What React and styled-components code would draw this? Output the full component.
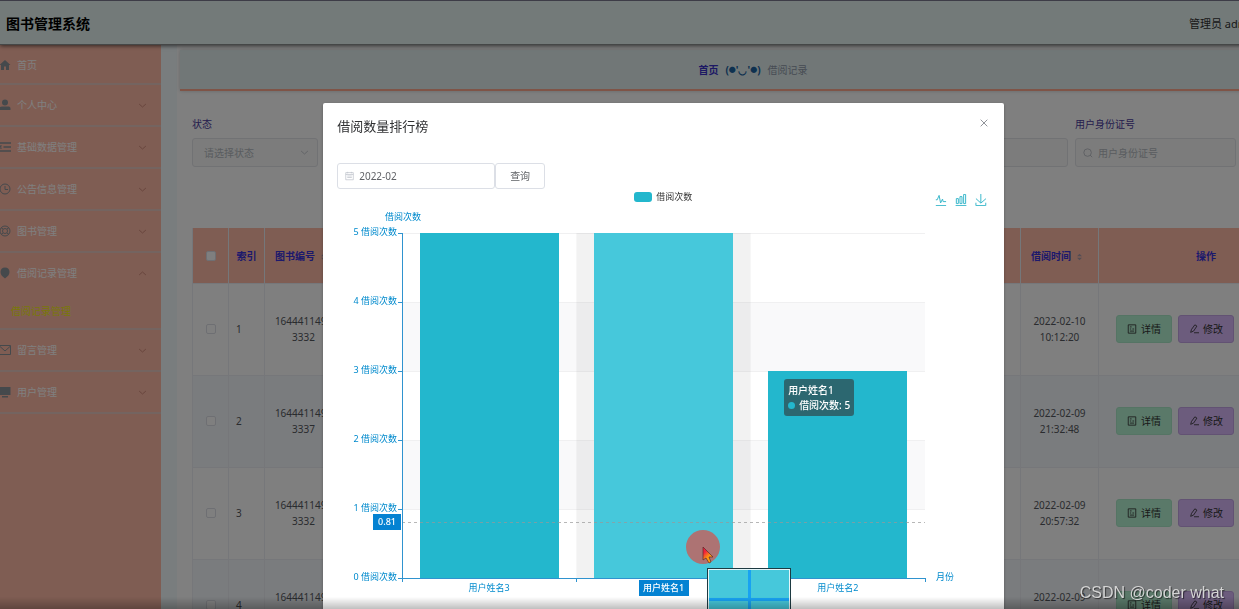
import React from 'react'
import styled, { createGlobalStyle } from 'styled-components'

const GlobalStyle = createGlobalStyle`
    * {
        box-sizing: border-box;
    }
    body {
        margin: 0;
        overflow: hidden;
        background-color: #ffffff;
        color: #606266;
        font-family: "Noto Sans", "Noto Sans CJK SC", sans-serif;
        font-size: 10px;
        line-height: 16px;
    }
    button, input, select {
        font: inherit;
        color: inherit;
    }
`

const Page = styled.div`
    width: calc(100% + 87px);
    height: 100vh;
    overflow: hidden;
    display: flex;
    flex-direction: column;
`

const Header = styled.header`
    height: 45px;
    flex: none;
    display: flex;
    align-items: center;
    justify-content: space-between;
    padding: 2px 0 0 6px;
    background-color: #e6f5f3;
    border-top: 1px solid #7b788f;
    border-bottom: 1px solid #8a8f8f;
    box-shadow: 0 1px 4px rgba(0, 0, 0, 0.6);
    position: relative;
`

const Title = styled.h1`
    margin: 0;
    color: #000000;
    font-size: 14px;
    font-weight: 700;
`

const Admin = styled.div`
    width: 137px;
    color: #333333;
    font-size: 11px;
`

const Body = styled.div`
    flex: 1;
    min-height: 0;
    display: flex;
`

const Sidebar = styled.nav`
    width: 161px;
    flex: none;
    background-color: #ffbba7;
`

const MenuItem = styled.a`
    height: ${props => (props.$first ? '40px' : '42px')};
    display: flex;
    align-items: center;
    gap: 6px;
    padding-top: ${props => (props.$first ? '2px' : '0')};
    padding-right: 14px;
    border-bottom: 2px solid ${props => (props.$open ? 'transparent' : '#e8c8c0')};
    color: #ffffff;
    text-decoration: none;

    svg:first-child {
        margin-left: -1px;
        color: #8b9299;
    }
    svg:last-child {
        margin-left: auto;
        color: #c0786a;
    }
`

const SubItem = styled.a`
    height: 35px;
    display: flex;
    align-items: center;
    padding: 0 0 2px 11px;
    border-bottom: 2px solid #e8c8c0;
    color: #f4ee10;
    text-decoration: none;
`

const Main = styled.main`
    flex: 1;
    min-width: 0;
    margin-left: 16px;
    padding: 5px 0 0 3px;
    background-color: #ffffff;
`

const Gutter = styled.div`
    flex: 1;
    display: flex;
    background-color: #f2fafc;
`

const Breadcrumb = styled.div`
    height: 41px;
    display: flex;
    align-items: center;
    justify-content: center;
    gap: 7px;
    background-color: #e2efef;
    border-bottom: 2px solid #ffa88e;
    box-shadow: 0 0 4px rgba(0, 0, 0, 0.2);
    color: #8e98a8;

    a {
        color: #3a32c8;
        font-weight: 700;
        text-decoration: none;
    }
    b {
        display: flex;
        align-items: center;
        color: #1c62a0;
    }
    small {
        font-size: 7px;
    }
`

const Filters = styled.form`
    display: grid;
    grid-template-columns: 126px 1fr 161px 83px;
    gap: 7px;
    padding: 25px 0 0 12px;
`

const Field = styled.div`
    display: flex;
    flex-direction: column;
    gap: 6px;

    label {
        color: #4a3a9c;
    }
`

const Control = styled.div`
    height: 29px;
    display: flex;
    align-items: center;
    gap: 5px;
    padding: 0 8px 0 7px;
    background-color: #f8f8f8;
    border: 1px solid #e2e4e9;
    border-radius: 3px;
    color: #b4b8c0;

    input, select {
        flex: 1;
        min-width: 0;
        padding: 0;
        border: none;
        background: none;
        appearance: none;
        color: #b4b8c0;
    }
    select {
        padding-left: 4px;
    }
    input::placeholder {
        color: #b4b8c0;
    }
`

const Table = styled.table`
    width: calc(100% - 24px);
    margin: 61px 12px 0;
    table-layout: fixed;
    border-collapse: collapse;
    text-align: center;
`

const Th = styled.th`
    width: ${props => props.$width || 'auto'};
    height: 55px;
    padding: 1px ${props => (props.$narrow ? '7px' : '10px')} 0;
    background-color: #ffbba7;
    border-left: 1px solid #ebeef5;
    border-right: 1px solid #ebeef5;
    color: #3a32d8;
    white-space: nowrap;
    text-align: ${props => (props.$sort ? 'left' : 'center')};

    svg {
        margin-left: 6px;
        vertical-align: middle;
    }
`

const Tr = styled.tr`
    height: 92px;
    background-color: ${props => (props.$striped ? '#f5f8fc' : '#ffffff')};
`

const Td = styled.td`
    padding: 0 ${props => (props.$narrow ? '7px' : '9px')};
    border: 1px solid #eceff4;
    color: #55585e;
    text-align: ${props => (props.$left ? 'left' : 'center')};
    word-break: ${props => (props.$break ? 'break-all' : 'normal')};
`

const Check = styled.input`
    appearance: none;
    display: block;
    width: 10px;
    height: 10px;
    margin: 0 auto;
    background-color: #ffffff;
    border: 1px solid #dcdfe6;
    border-radius: 2px;
`

const Actions = styled.div`
    display: flex;
    gap: 6px;
    padding-left: 8px;
`

const ActionButton = styled.button`
    width: 56px;
    height: 28px;
    display: flex;
    align-items: center;
    justify-content: center;
    gap: 4px;
    padding: 0;
    background-color: ${props => props.$color};
    border: 1px solid ${props => props.$edge};
    border-radius: 3px;
    color: #333333;
`

const Overlay = styled.div`
    position: fixed;
    inset: 0;
    overflow: hidden;
    background-color: rgba(0, 0, 0, 0.5);
`

const Dialog = styled.section`
    width: calc(55% - 1px);
    margin: 103px 0 0 calc(26% + 1px);
    padding: 13px 14px 20px;
    background-color: #ffffff;
    border-radius: 2px;
    box-shadow: 0 1px 3px rgba(0, 0, 0, 0.3);
`

const DialogHead = styled.div`
    display: flex;
    align-items: flex-start;
    justify-content: space-between;

    h2 {
        margin: 0;
        color: #303133;
        font-size: 13px;
        font-weight: 400;
        line-height: 20px;
    }
`

const IconButton = styled.button`
    display: flex;
    padding: ${props => props.$pad || '0'};
    border: none;
    background: none;
    color: ${props => props.$color};
`

const Query = styled.form`
    display: flex;
    margin-top: 27px;
`

const DateBox = styled.label`
    width: 158px;
    height: 26px;
    display: flex;
    align-items: center;
    gap: 5px;
    padding-left: 7px;
    border: 1px solid #dcdfe6;
    border-radius: 3px;

    input {
        width: 100%;
        padding: 0;
        border: none;
        outline: none;
    }
`

const QueryButton = styled.button`
    width: 50px;
    height: 26px;
    padding: 0;
    background-color: #ffffff;
    border: 1px solid #dcdfe6;
    border-radius: 3px;
`

const ChartHead = styled.div`
    height: 20px;
    display: grid;
    grid-template-columns: 1fr auto 1fr;
    align-items: start;
`

const Legend = styled.div`
    grid-column: 2;
    display: flex;
    align-items: center;
    gap: 4px;
    color: #333333;
    font-size: 9px;

    &::before {
        content: "";
        width: 18px;
        height: 10px;
        border-radius: 3px;
        background-color: #23b7cd;
    }
`

const Toolbox = styled.div`
    display: flex;
    justify-content: flex-end;
    gap: 8px;
    padding: 5px 3px 0 0;
`

const ChartBox = styled.div`
    position: relative;

    > svg {
        display: block;
        overflow: visible;
    }
`

const Tooltip = styled.div`
    position: absolute;
    left: 447px;
    top: 170px;
    padding: 4px 4px 3px;
    background-color: rgba(50, 50, 50, 0.6);
    border-radius: 3px;
    color: #ffffff;
    font-weight: 500;
    line-height: 15px;
    white-space: nowrap;

    div {
        display: flex;
        align-items: center;
        gap: 4px;
    }
    i {
        width: 7px;
        height: 7px;
        border-radius: 50%;
        background-color: #23b7cd;
    }
`

const Pointer = styled.svg`
    position: absolute;
    left: 348px;
    top: 321px;
`

const Magnifier = styled.div`
    position: absolute;
    left: 370px;
    top: 359px;
    width: 84px;
    height: 62px;
    border: 1px solid #1d3a42;
    outline: 1px solid #e4f6f9;
    outline-offset: -2px;
    background:
        linear-gradient(#18a2f2, #18a2f2) center / 3px 100% no-repeat,
        linear-gradient(#18a2f2, #18a2f2) center / 100% 3px no-repeat,
        #46c8db;
`

const BottomShade = styled.div`
    position: fixed;
    left: 0;
    right: 0;
    bottom: 0;
    height: 12px;
    background: linear-gradient(rgba(0, 0, 0, 0), rgba(0, 0, 0, 0.25));
`

const Watermark = styled.div`
    position: fixed;
    right: 15px;
    bottom: 6px;
    color: #d4d4d4;
    font-family: "Liberation Sans", sans-serif;
    font-size: 16px;
    line-height: 20px;
    text-shadow: 1px 1px 1px rgba(0, 0, 0, 0.6);
`

const Icon = ({ size = 12, children, ...rest }) => (
    <svg width={size} height={size} viewBox="0 0 24 24" fill="none" stroke="currentColor" strokeWidth="2" aria-hidden="true" {...rest}>
        {children}
    </svg>
)

const icons = {
    home: <path d="M12 2 1 12h3v10h6v-7h4v7h6V12h3z" fill="currentColor" stroke="none" />,
    user: <path d="M12 1a6 6 0 0 1 0 12 6 6 0 0 1 0-12zM1 22v-3c0-3 2-4 5-4h12c3 0 5 1 5 4v3z" fill="currentColor" stroke="none" />,
    list: <path d="M0 4h24M9 12h15M0 20h24M5 9 1 12l4 3" strokeWidth="3" />,
    clock: <><circle cx="12" cy="12" r="10" /><path d="M12 6v7h6" /></>,
    help: <><circle cx="12" cy="12" r="10" /><circle cx="12" cy="12" r="5" /><path d="m4 5 4 3M20 5l-4 3M4 19l4-3M20 19l-4-3" /></>,
    pin: <path d="M12 1c6 0 9 4 9 9 0 6-4 9-9 13-5-4-9-7-9-13 0-5 3-9 9-9z" fill="currentColor" stroke="none" />,
    mail: <><path d="M1 3h22v18H1z" /><path d="m2 5 10 9L22 5" /></>,
    monitor: <path d="M1 2h22v16H1zM6 20h12v3H6z" fill="currentColor" stroke="none" />,
    down: <path d="m3 8 9 8 9-8" />,
    up: <path d="m3 16 9-8 9 8" />,
    search: <><circle cx="11" cy="11" r="9" /><path d="m17 17 5 5" /></>,
    doc: <><path d="M3 2h18v20H3z" /><path d="M7 7h4M7 12h3M13 12h4M7 17h10" /></>,
    edit: <path d="M4 20 6 13 14 2l5 3-8 12-7 3zM12 21h12" />,
    calendar: <><path d="M2 3h20v19H2z" /><path d="M2 8h20M6 12h12M6 16h12M7 1v4M17 1v4" /></>,
    close: <path d="m2 2 20 20M22 2 2 22" />
}

const menu = [
    { text: '首页', icon: 'home' },
    { text: '个人中心', icon: 'user', arrow: 'down' },
    { text: '基础数据管理', icon: 'list', arrow: 'down' },
    { text: '公告信息管理', icon: 'clock', arrow: 'down' },
    { text: '图书管理', icon: 'help', arrow: 'down' },
    { text: '借阅记录管理', icon: 'pin', arrow: 'up', sub: '借阅记录管理' },
    { text: '留言管理', icon: 'mail', arrow: 'down' },
    { text: '用户管理', icon: 'monitor', arrow: 'down' }
]

const rows = [
    { id: 1, code: '16444114933332', time: '2022-02-10 10:12:20' },
    { id: 2, code: '16444114933337', time: '2022-02-09 21:32:48' },
    { id: 3, code: '16444114933332', time: '2022-02-09 20:57:32' },
    { id: 4, code: '16444114933337', time: '2022-02-09 20:57:08' }
]

const tools = [
    { label: '折线图', d: 'M4.1,28.9h7.1l9.3-22l7.4,38l9.7-19.7l3,12.8h14.9M4.1,58h51.4' },
    { label: '柱状图', d: 'M6.7,22.9h10V48h-10V22.9zM24.9,13h10v35h-10V13zM43.2,2h10v46h-10V2zM3.1,58h53.7' },
    { label: '下载', d: 'M4.7,22.9L29.3,45.5L54.7,23.4M4.6,43.6L4.6,58L53.8,58L53.8,43.6M29.2,45.1L29.2,0' }
]

const data = [
    { name: '用户姓名3', value: 5 },
    { name: '用户姓名1', value: 5, active: true },
    { name: '用户姓名2', value: 3 }
]

const SortIcon = () => (
    <svg width="5" height="10" viewBox="0 0 6 10" fill="#a89aa8" aria-hidden="true">
        <path d="M3 1 6 4H0zM3 9 0 6h6z" />
    </svg>
)

// plot area of the bar chart
const LEFT = 65
const RIGHT = 588
const TOP = 24
const STEP = 69
const BOTTOM = TOP + STEP * 5
const BAND = (RIGHT - LEFT) / 3

const Chart = () => (
    <svg width="653" height="400" fontSize="9" fill="#008acd">
        {[1, 3].map(i => (
            <rect key={i} x={LEFT} y={TOP + i * STEP} width={RIGHT - LEFT} height={STEP} fill="#f9f9fa" />
        ))}
        {[0, 1, 2, 3, 4].map(i => (
            <path key={i} d={`M${LEFT} ${TOP + i * STEP + 0.5}H${RIGHT}`} stroke="#f0f0f1" />
        ))}
        <rect x={LEFT + BAND} y={TOP} width={BAND} height={BOTTOM - TOP} fill="#969696" opacity="0.12" />
        {data.map((item, i) => (
            <rect
                key={item.name}
                x={Math.round(LEFT + BAND * i + 17.5)}
                y={BOTTOM - item.value * STEP}
                width="139"
                height={item.value * STEP}
                fill={item.active ? '#46c8db' : '#23b7cd'}
            />
        ))}
        <path d={`M${LEFT} 313.5H${RIGHT}`} stroke="#999999" strokeDasharray="3 3" opacity="0.7" />
        <path d={`M${LEFT + 0.5} ${TOP}V${BOTTOM}M${LEFT} ${BOTTOM + 0.5}H${RIGHT}`} stroke="#2f93cf" />
        {[0, 1, 2, 3, 4, 5].map(n => (
            <g key={n}>
                <path d={`M${LEFT - 4} ${BOTTOM - n * STEP + 0.5}h4`} stroke="#2f93cf" />
                <text x={LEFT - 5} y={BOTTOM - n * STEP + 2} textAnchor="end">{n} 借阅次数</text>
            </g>
        ))}
        {[0, 1, 2, 3].map(n => (
            <path key={n} d={`M${Math.round(LEFT + n * BAND) + 0.5} ${BOTTOM}v4`} stroke="#2f93cf" />
        ))}
        <text x={LEFT + 1} y="11" textAnchor="middle">借阅次数</text>
        <text x="599" y={BOTTOM + 2}>月份</text>
        <rect x="302" y={BOTTOM + 2} width="50" height="16" fill="#0482d2" />
        {data.map((item, i) => (
            <text
                key={item.name}
                x={LEFT + BAND * (i + 0.5)}
                y={BOTTOM + 13}
                textAnchor="middle"
                fill={item.active ? '#ffffff' : '#008acd'}
                fontWeight={item.active ? 500 : 400}
            >
                {item.name}
            </text>
        ))}
        <rect x="36" y="305" width="28" height="16" fill="#0482d2" />
        <text x="50" y="316" textAnchor="middle" fill="#ffffff" fontWeight="500">0.81</text>
    </svg>
)

const RankDialog = () => (
    <Dialog role="dialog" aria-labelledby="rank-title">
        <DialogHead>
            <h2 id="rank-title">借阅数量排行榜</h2>
            <IconButton type="button" $color="#909399" $pad="3px 2px" aria-label="关闭">
                <Icon size={8} strokeWidth="3">{icons.close}</Icon>
            </IconButton>
        </DialogHead>
        <Query>
            <DateBox>
                <Icon size={10} color="#c0c4cc">{icons.calendar}</Icon>
                <input aria-label="月份" defaultValue="2022-02" />
            </DateBox>
            <QueryButton type="button">查询</QueryButton>
        </Query>
        <ChartHead>
            <Legend>借阅次数</Legend>
            <Toolbox>
                {tools.map(tool => (
                    <IconButton key={tool.label} type="button" $color="#3db9cc" aria-label={tool.label}>
                        <svg width="12" height="12" viewBox="0 0 60 60" fill="none" stroke="currentColor" strokeWidth="5">
                            <path d={tool.d} />
                        </svg>
                    </IconButton>
                ))}
            </Toolbox>
        </ChartHead>
        <ChartBox>
            <Chart />
            <Tooltip>
                用户姓名1
                <div><i />借阅次数: 5</div>
            </Tooltip>
            <Pointer width="36" height="36" viewBox="0 0 36 36">
                <defs>
                    <linearGradient id="arrow" x1="0" y1="0" x2="0.6" y2="1">
                        <stop offset="0.3" stopColor="#f0203c" />
                        <stop offset="0.7" stopColor="#ff9a10" />
                    </linearGradient>
                </defs>
                <circle cx="18" cy="17" r="17" fill="#ad7373" />
                <path d="M18 17v13l3-2 3 5 2-1-2-5h4z" fill="url(#arrow)" stroke="#5c2a2a" strokeWidth="0.7" />
            </Pointer>
            <Magnifier />
        </ChartBox>
    </Dialog>
)

const App = () => {
  return (
    <>
        <GlobalStyle />
        <Page>
            <Header>
                <Title>图书管理系统</Title>
                <Admin>管理员 admin</Admin>
            </Header>
            <Body>
                <Sidebar>
                    {menu.map((item, i) => (
                        <React.Fragment key={item.text}>
                            <MenuItem href="#" $first={i === 0} $open={!!item.sub}>
                                <Icon>{icons[item.icon]}</Icon>
                                <span>{item.text}</span>
                                {item.arrow && <Icon size={9}>{icons[item.arrow]}</Icon>}
                            </MenuItem>
                            {item.sub && <SubItem href="#">{item.sub}</SubItem>}
                        </React.Fragment>
                    ))}
                </Sidebar>
                <Gutter>
                    <Main>
                        <Breadcrumb>
                            <a href="#">首页</a>
                            <b>(<small>●</small>'◡'<small>●</small>)</b>
                            <span>借阅记录</span>
                        </Breadcrumb>
                        <Filters>
                            <Field>
                                <label htmlFor="status">状态</label>
                                <Control>
                                    <select id="status">
                                        <option>请选择状态</option>
                                    </select>
                                    <Icon size={9}>{icons.down}</Icon>
                                </Control>
                            </Field>
                            <Field>
                                <label htmlFor="keyword">&nbsp;</label>
                                <Control>
                                    <input id="keyword" />
                                </Control>
                            </Field>
                            <Field>
                                <label htmlFor="idcard">用户身份证号</label>
                                <Control>
                                    <Icon size={10}>{icons.search}</Icon>
                                    <input id="idcard" placeholder="用户身份证号" />
                                </Control>
                            </Field>
                        </Filters>
                        <Table>
                            <thead>
                                <tr>
                                    <Th $width="36px" $narrow><Check type="checkbox" aria-label="全选" /></Th>
                                    <Th $width="36px" $narrow>索引</Th>
                                    <Th $width="78px" $sort>图书编号<SortIcon /></Th>
                                    <Th />
                                    <Th $width="78px" $sort>借阅时间<SortIcon /></Th>
                                    <Th $width="215px">操作</Th>
                                </tr>
                            </thead>
                            <tbody>
                                {rows.map((row, i) => (
                                    <Tr key={row.id} $striped={i % 2 === 1}>
                                        <Td $narrow><Check type="checkbox" aria-label={`选择 ${row.id}`} /></Td>
                                        <Td $narrow $left>{row.id}</Td>
                                        <Td $break>{row.code}</Td>
                                        <Td />
                                        <Td>{row.time}</Td>
                                        <Td>
                                            <Actions>
                                                <ActionButton type="button" $color="#b4f2d2" $edge="#aae8c8">
                                                    <Icon size={10}>{icons.doc}</Icon>详情
                                                </ActionButton>
                                                <ActionButton type="button" $color="#d8b8fa" $edge="#c4a4e6">
                                                    <Icon size={10}>{icons.edit}</Icon>修改
                                                </ActionButton>
                                            </Actions>
                                        </Td>
                                    </Tr>
                                ))}
                            </tbody>
                        </Table>
                    </Main>
                </Gutter>
            </Body>
        </Page>
        <Overlay>
            <RankDialog />
        </Overlay>
        <BottomShade />
        <Watermark>CSDN @coder what</Watermark>
    </>
  )
}

export default App
